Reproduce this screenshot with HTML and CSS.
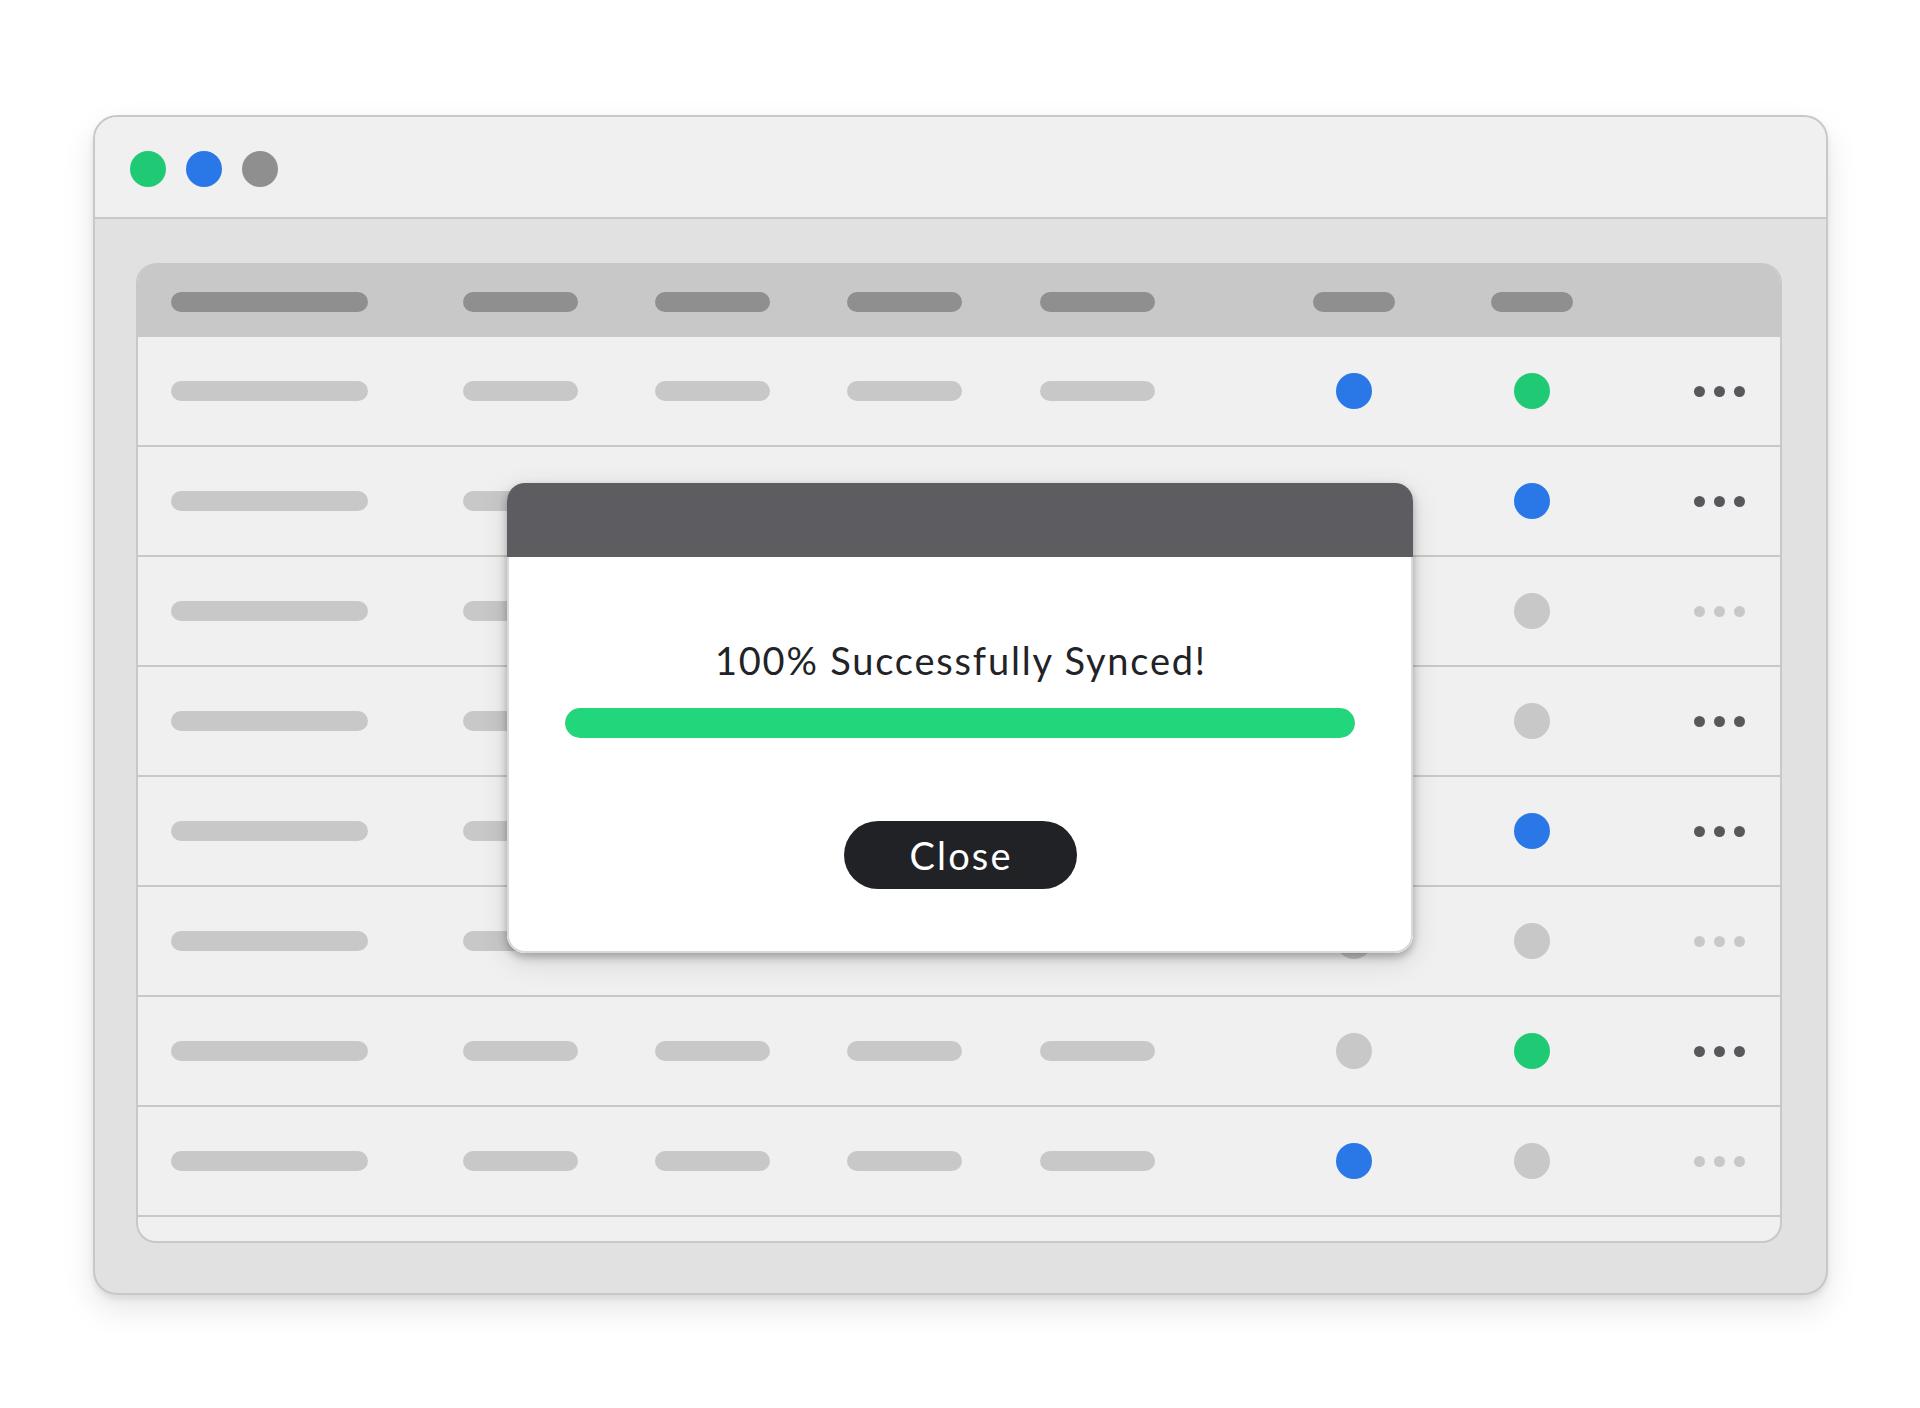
FILE: index.html
```html
<!DOCTYPE html>
<html lang="en">
<head>
<meta charset="utf-8">
<title>Sync complete</title>
<link rel="stylesheet" href="styles.css">
</head>
<body>
<div class="window">
  <div class="titlebar">
    <span class="light light-green"></span>
    <span class="light light-blue"></span>
    <span class="light light-gray"></span>
  </div>
  <div class="window-body">
    <div class="table">
      <div class="thead">
        <span class="bar bar-wide bar-dark"></span>
        <span class="bar bar-dark"></span>
        <span class="bar bar-dark"></span>
        <span class="bar bar-dark"></span>
        <span class="bar bar-dark"></span>
        <span class="bar bar-short bar-dark"></span>
        <span class="bar bar-short bar-dark"></span>
        <span></span>
      </div>

      <div class="row">
        <span class="bar bar-wide"></span><span class="bar"></span><span class="bar"></span><span class="bar"></span><span class="bar"></span>
        <span class="dot-cell"><span class="dot dot-blue"></span></span>
        <span class="dot-cell"><span class="dot dot-green"></span></span>
        <span class="more"><i></i><i></i><i></i></span>
      </div>
      <div class="row">
        <span class="bar bar-wide"></span><span class="bar"></span><span class="bar"></span><span class="bar"></span><span class="bar"></span>
        <span class="dot-cell"><span class="dot dot-gray"></span></span>
        <span class="dot-cell"><span class="dot dot-blue"></span></span>
        <span class="more"><i></i><i></i><i></i></span>
      </div>
      <div class="row">
        <span class="bar bar-wide"></span><span class="bar"></span><span class="bar"></span><span class="bar"></span><span class="bar"></span>
        <span class="dot-cell"><span class="dot dot-gray"></span></span>
        <span class="dot-cell"><span class="dot dot-gray"></span></span>
        <span class="more more-light"><i></i><i></i><i></i></span>
      </div>
      <div class="row">
        <span class="bar bar-wide"></span><span class="bar"></span><span class="bar"></span><span class="bar"></span><span class="bar"></span>
        <span class="dot-cell"><span class="dot dot-gray"></span></span>
        <span class="dot-cell"><span class="dot dot-gray"></span></span>
        <span class="more"><i></i><i></i><i></i></span>
      </div>
      <div class="row">
        <span class="bar bar-wide"></span><span class="bar"></span><span class="bar"></span><span class="bar"></span><span class="bar"></span>
        <span class="dot-cell"><span class="dot dot-gray"></span></span>
        <span class="dot-cell"><span class="dot dot-blue"></span></span>
        <span class="more"><i></i><i></i><i></i></span>
      </div>
      <div class="row">
        <span class="bar bar-wide"></span><span class="bar"></span><span class="bar"></span><span class="bar"></span><span class="bar"></span>
        <span class="dot-cell"><span class="dot dot-gray"></span></span>
        <span class="dot-cell"><span class="dot dot-gray"></span></span>
        <span class="more more-light"><i></i><i></i><i></i></span>
      </div>
      <div class="row">
        <span class="bar bar-wide"></span><span class="bar"></span><span class="bar"></span><span class="bar"></span><span class="bar"></span>
        <span class="dot-cell"><span class="dot dot-gray"></span></span>
        <span class="dot-cell"><span class="dot dot-green"></span></span>
        <span class="more"><i></i><i></i><i></i></span>
      </div>
      <div class="row">
        <span class="bar bar-wide"></span><span class="bar"></span><span class="bar"></span><span class="bar"></span><span class="bar"></span>
        <span class="dot-cell"><span class="dot dot-blue"></span></span>
        <span class="dot-cell"><span class="dot dot-gray"></span></span>
        <span class="more more-light"><i></i><i></i><i></i></span>
      </div>
      <div class="tfoot"></div>
    </div>
  </div>

  <div class="modal">
    <div class="modal-head"></div>
    <div class="modal-body">
      <p class="modal-msg">100% Successfully Synced!</p>
      <div class="progress"><div class="progress-fill" style="width:100%"></div></div>
      <button class="btn-close" type="button">Close</button>
    </div>
  </div>
</div>
</body>
</html>
```

FILE: styles.css
```css
* { box-sizing: border-box; }

html, body {
  margin: 0;
  padding: 0;
  background: #ffffff;
}

body {
  width: 1920px;
  height: 1408px;
  overflow: hidden;
  font-family: "Lato", "Open Sans", "Liberation Sans", sans-serif;
}

.window {
  position: relative;
  margin: 115px 0 0 93px;
  width: 1735px;
  height: 1180px;
  border: 2px solid #c8c8c8;
  border-radius: 24px;
  background: #e1e1e1;
  box-shadow: 0 4px 6px rgba(0, 0, 0, 0.08), 0 14px 32px rgba(0, 0, 0, 0.10);
  overflow: hidden;
}

.titlebar {
  display: flex;
  align-items: center;
  gap: 20px;
  height: 102px;
  padding: 4px 0 0 35px;
  background: #f0f0f0;
  border-bottom: 2px solid #c8c8c8;
}

.light {
  width: 36px;
  height: 36px;
  border-radius: 50%;
  display: block;
}
.light-green { background: #20c973; }
.light-blue  { background: #2a77e8; }
.light-gray  { background: #8f8f90; }

.window-body {
  padding: 44px 44px 50px 41px;
}

.table {
  width: 1646px;
  border-radius: 20px;
  overflow: hidden;
  background: #f0f0f0;
  border: 2px solid #c8c8c8;
  border-top: 0;
}

.thead, .row {
  display: grid;
  grid-template-columns: 292px 192px 192px 193px 273px 178px 203px 1fr;
  align-items: center;
  padding-left: 33px;
}

.thead {
  height: 74px;
  padding-top: 4px;
  background: #c8c8c8;
  margin: 0 -2px;
  padding-left: 35px;
}

.row {
  height: 110px;
  border-bottom: 2px solid #c8c8c8;
}

.tfoot {
  height: 24px;
}

.bar {
  display: block;
  width: 115px;
  height: 20px;
  border-radius: 10px;
  background: #c8c8c8;
}
.bar-wide { width: 197px; }
.bar-short { width: 82px; }
.bar-dark { background: #8f8f90; }

.dot-cell {
  width: 82px;
  display: flex;
  justify-content: center;
}

.dot {
  display: block;
  width: 36px;
  height: 36px;
  border-radius: 50%;
}
.dot-blue  { background: #2a77e8; }
.dot-green { background: #20c973; }
.dot-gray  { background: #c8c8c8; }

.more {
  display: flex;
  gap: 9px;
}
.more i {
  display: block;
  width: 11px;
  height: 11px;
  border-radius: 50%;
  background: #58585c;
}
.more-light i { background: #c8c8c8; }

/* modal overlay */
.modal {
  position: absolute;
  left: 412px;
  top: 366px;
  width: 906px;
  height: 470px;
  border-radius: 18px;
  background: #ffffff;
  box-shadow: 0 4px 8px rgba(0, 0, 0, 0.28), 0 8px 30px rgba(0, 0, 0, 0.12);
  display: flex;
  flex-direction: column;
  overflow: hidden;
}

.modal-head {
  height: 74px;
  background: #5d5c61;
  flex: none;
}

.modal-body {
  flex: 1;
  display: flex;
  flex-direction: column;
  align-items: center;
  border: 2px solid #d9d9d9;
  border-top: 0;
  border-radius: 0 0 18px 18px;
  padding-top: 80px;
}

.modal-msg {
  margin: 0;
  font-size: 38px;
  line-height: 46px;
  letter-spacing: 1.8px;
  text-indent: 1.8px;
  color: #222327;
  font-weight: 400;
}

.progress {
  margin-top: 25px;
  width: 790px;
  height: 30px;
  border-radius: 15px;
  background: #e6e6e6;
  overflow: hidden;
}
.progress-fill {
  height: 100%;
  background: #22d67b;
  border-radius: 15px;
}

.btn-close {
  margin-top: 83px;
  width: 233px;
  height: 68px;
  border: 0;
  border-radius: 34px;
  background: #212226;
  color: #ffffff;
  font-family: inherit;
  font-size: 38px;
  line-height: 68px;
  letter-spacing: 2.2px;
  text-indent: 2.2px;
  padding: 0;
}
```
